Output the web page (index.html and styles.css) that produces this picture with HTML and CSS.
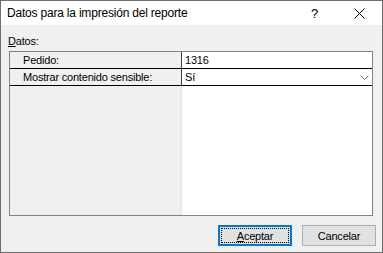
FILE: index.html
```html
<!DOCTYPE html>
<html lang="es">
<head>
    <meta charset="UTF-8">
    <title>Datos para la impresión del reporte</title>
    <link rel="stylesheet" href="styles.css">
</head>
<body>
    <div class="window">
        <div class="titlebar">
            <span class="title">Datos para la impresión del reporte</span>
            <span class="help">?</span>
            <svg class="close" width="11" height="11" viewBox="0 0 11 11">
                <path d="M0.5 0.5 L10.5 10.5 M10.5 0.5 L0.5 10.5" stroke="#000" stroke-width="1" fill="none"/>
            </svg>
        </div>

        <div class="content">
            <div class="label"><u>D</u>atos:</div>

            <div class="grid">
                <div class="names">
                    <div class="cell">Pedido:</div>
                    <div class="cell">Mostrar contenido sensible:</div>
                </div>
                <div class="values">
                    <div class="cell">1316</div>
                    <div class="cell combo">
                        <span>Sí</span>
                        <svg class="chevron" width="9" height="5" viewBox="0 0 9 5">
                            <polyline points="0.5,0.5 4.5,4.5 8.5,0.5" stroke="#7a7a7a" stroke-width="1" fill="none"/>
                        </svg>
                    </div>
                </div>
            </div>

            <div class="buttons">
                <button class="btn default"><u>A</u>ceptar</button>
                <button class="btn">Cancelar</button>
            </div>
        </div>
    </div>
</body>
</html>
```

FILE: styles.css
```css
* {
    margin: 0;
    padding: 0;
    box-sizing: border-box;
}

body {
    font-family: 'Liberation Sans', Arial, sans-serif;
    font-size: 11px;
    letter-spacing: -0.2px;
    color: #000;
    background-color: #fff;
}

.window {
    width: 383px;
    height: 253px;
    border: 1px solid #6e6e6e;
    display: flex;
    flex-direction: column;
    background-color: #f0f0f0;
}

/* barra de título */
.titlebar {
    height: 24px;
    background-color: #fff;
    display: flex;
    align-items: center;
    padding-left: 6px;
    font-size: 12px;
}

.title {
    flex: 1;
}

.help {
    margin-right: 36px;
    font-size: 13px;
}

.close {
    margin-right: 17px;
}

/* contenido */
.content {
    flex: 1;
    display: flex;
    flex-direction: column;
    padding: 9px 6px 6px 7px;
}

.label {
    line-height: 15px;
    height: 15px;
}

.grid {
    flex: 1;
    margin: 2px 3px 0 1px;
    border: 1px solid #828282;
    display: flex;
}

.names {
    width: 172px;
    background-color: #f0f0f0;
    border-right: 1px solid #e3e3e3;
}

.values {
    flex: 1;
    background-color: #fff;
}

.cell {
    height: 17px;
    line-height: 16px;
    border-bottom: 1px solid #000;
    white-space: nowrap;
}

.names .cell {
    padding-left: 13px;
    margin-right: -1px;
    border-right: 1px solid #404040;
}

.values .cell {
    padding-left: 3px;
}

.combo {
    display: flex;
    align-items: center;
    justify-content: space-between;
    padding-right: 3px;
}

/* botones */
.buttons {
    margin-top: 9px;
    display: flex;
    justify-content: flex-end;
    gap: 10px;
}

.btn {
    width: 74px;
    height: 21px;
    font-family: inherit;
    font-size: 11px;
    letter-spacing: inherit;
    background-color: #e1e1e1;
    border: 1px solid #adadad;
    color: #000;
}

.btn.default {
    border-color: #0078d7;
    box-shadow: inset 0 0 0 1px #0078d7;
    outline: 1px dotted #000;
    outline-offset: -4px;
}
```
